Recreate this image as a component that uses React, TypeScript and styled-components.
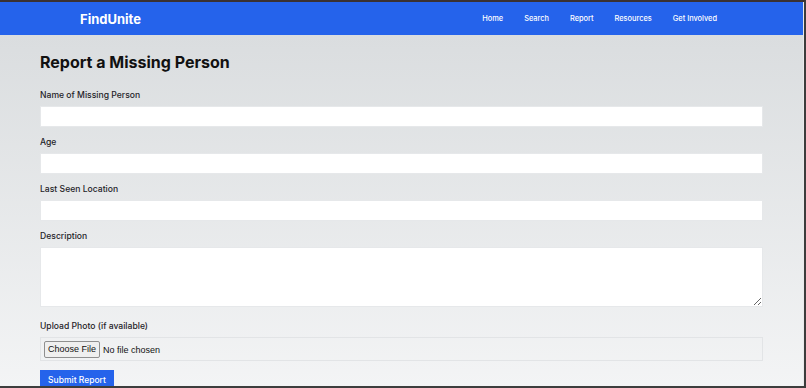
import styled, { createGlobalStyle } from "styled-components";

const GlobalStyle = createGlobalStyle`
  html, body {
    margin: 0;
    padding: 0;
    background: #3b3535;
  }
  * {
    box-sizing: border-box;
  }
`;

const Frame = styled.div`
  width: 806px;
  height: 388px;
  overflow: hidden;
  border-top: 2px solid #3a3131;
  border-right: 2px solid #3c3c3c;
  border-bottom: 2px solid #3d3d3d;
`;

const Page = styled.div`
  height: 100%;
  display: flex;
  flex-direction: column;
  border-right: 1px solid #e9eaeb;
  font-family: Inter, "Noto Sans", sans-serif;
  color: #111827;
`;

const NavBar = styled.nav`
  height: 33px;
  flex-shrink: 0;
  background: #2563eb;
  display: flex;
  align-items: center;
  justify-content: space-between;
  padding: 0 86px 0 80px;
`;

const Brand = styled.div`
  color: #ffffff;
  font-size: 13px;
  font-weight: 700;
`;

const NavLinks = styled.div`
  display: flex;
  gap: 21px;
`;

const NavLink = styled.a`
  color: #ffffff;
  font-size: 7.4px;
  font-weight: 500;
  text-decoration: none;
`;

const Main = styled.main`
  flex: 1;
  background: linear-gradient(180deg, #dadddf 0%, #f3f4f5 100%);
  padding: 18px 40px 0;
  overflow: hidden;
`;

const Heading = styled.h1`
  margin: 0 0 17px;
  font-size: 16px;
  line-height: 19px;
  font-weight: 700;
  color: #111111;
`;

const Form = styled.form`
  display: flex;
  flex-direction: column;
  gap: 9px;
`;

const Field = styled.div`
  display: flex;
  flex-direction: column;
  gap: 5px;
`;

const Label = styled.label`
  font-size: 8.6px;
  line-height: 12px;
  font-weight: 500;
  color: #1f2328;
`;

const TextInput = styled.input`
  height: 21px;
  width: 100%;
  border: 1px solid #e6e8ea;
  background: #ffffff;
  font-family: inherit;
  font-size: 9px;
  padding: 0 6px;
  outline: none;
`;

const TextArea = styled.textarea`
  height: 60px;
  width: 100%;
  margin-bottom: 4px;
  border: 1px solid #e6e8ea;
  background: #ffffff;
  font-family: inherit;
  font-size: 9px;
  padding: 4px 6px;
  outline: none;
  display: block;
`;

const FileBox = styled.div`
  border: 1px solid #e2e4e6;
  padding: 3px;
  height: 24px;
  display: flex;
  align-items: center;
`;

const FileInput = styled.input`
  font-family: "Liberation Sans", Arial, sans-serif;
  font-size: 9px;
  color: #111111;

  &::file-selector-button {
    font-family: inherit;
    font-size: 9px;
    height: 17px;
    padding: 0 3px;
    margin-right: 3px;
    border: 1px solid #8f8f8f;
    border-radius: 2px;
    background: #efefef;
    color: #111111;
  }
`;

const SubmitButton = styled.button`
  align-self: flex-start;
  width: 74px;
  border: none;
  background: #2563eb;
  color: #ffffff;
  font-family: inherit;
  font-size: 8.5px;
  line-height: 12px;
  font-weight: 500;
  padding: 4px 0 6px;
`;

export default function App() {
  return (
    <>
      <GlobalStyle />
      <Frame>
        <Page>
          <NavBar>
            <Brand>FindUnite</Brand>
            <NavLinks>
              {["Home", "Search", "Report", "Resources", "Get Involved"].map(l => (
                <NavLink key={l} href="#">{l}</NavLink>
              ))}
            </NavLinks>
          </NavBar>
          <Main>
            <Heading>Report a Missing Person</Heading>
            <Form onSubmit={e => e.preventDefault()}>
              <Field>
                <Label>Name of Missing Person</Label>
                <TextInput type="text" />
              </Field>
              <Field>
                <Label>Age</Label>
                <TextInput type="text" />
              </Field>
              <Field>
                <Label>Last Seen Location</Label>
                <TextInput type="text" />
              </Field>
              <Field>
                <Label>Description</Label>
                <TextArea />
              </Field>
              <Field>
                <Label>Upload Photo (if available)</Label>
                <FileBox>
                  <FileInput type="file" />
                </FileBox>
              </Field>
              <SubmitButton type="submit">Submit Report</SubmitButton>
            </Form>
          </Main>
        </Page>
      </Frame>
    </>
  );
}
